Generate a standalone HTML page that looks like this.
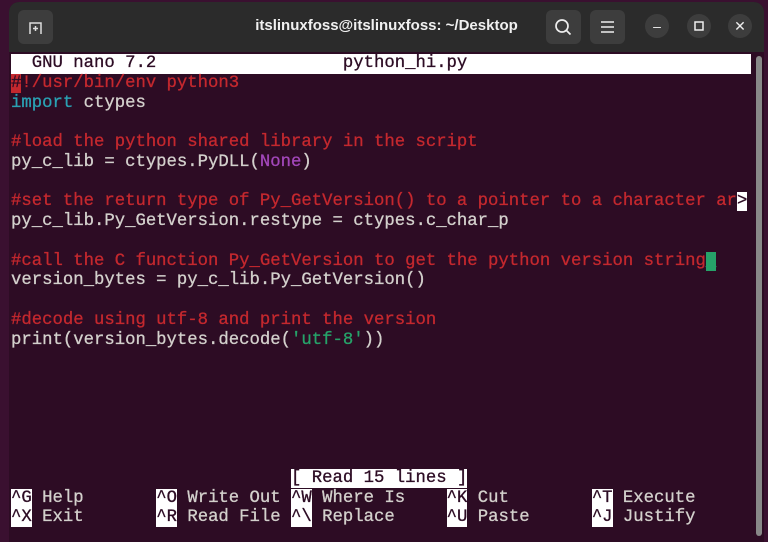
<!DOCTYPE html>
<html><head><style>
body{margin:0;width:768px;height:531px;background:#3a1030;overflow:hidden;font-family:"Liberation Sans",sans-serif}
.win{position:absolute;left:9px;top:2px;width:755px;height:540px;background:#2d0c24;border-radius:10px 10px 0 0;overflow:hidden}
.hdr{position:absolute;left:0;top:0;right:0;height:50px;background:#2b2b2b}
.btn{position:absolute;background:#3d3d3d;border-radius:6px}
.cir{position:absolute;width:24px;height:24px;border-radius:50%;background:#3d3d3d;top:12px;color:#eee;text-align:center;line-height:24px;font-size:14px}
.title{position:absolute;left:0;right:0;top:15px;text-align:center;color:#f0f0f0;font-weight:bold;font-size:15px}
pre{position:absolute;margin:0;left:2px;top:52px;font-family:"Liberation Mono",monospace;font-size:17.3px;line-height:19.75px;color:#d3d0cc;-webkit-text-stroke:0.3px currentColor}
.c{color:#c4282e}.k{color:#2aa1b3}.n{color:#a347ba}.s{color:#26a269}
.inv{background:#fff;color:#2d0c24}
.bar{display:inline-block;width:740px;background:#fff;color:#2d0c24}
.cur{background:#26a269;color:#26a269}
.sb{position:absolute;left:747px;top:54px;width:6px;height:480px;background:#888;border-radius:3px}
</style></head><body>
<div class="win">
<div class="hdr">
<div class="btn" style="left:9px;top:8px;width:35px;height:34px"><svg width="35" height="34"><path d="M12 24V13h11v11M15 18.5h5M17.5 16v5" stroke="#ddd" stroke-width="1.5" fill="none"/></svg></div>
<div class="title">itslinuxfoss@itslinuxfoss: ~/Desktop</div>
<div class="btn" style="left:537px;top:8px;width:35px;height:34px"><svg width="35" height="34"><circle cx="16" cy="16" r="6" stroke="#eee" stroke-width="1.7" fill="none"/><path d="M20.5 20.5l4 4" stroke="#eee" stroke-width="1.7"/></svg></div>
<div class="btn" style="left:581px;top:8px;width:35px;height:34px"><svg width="35" height="34"><path d="M11 12h13M11 17h13M11 22h13" stroke="#eee" stroke-width="1.5"/></svg></div>
<div class="cir" style="left:636px">–</div>
<div class="cir" style="left:678px"><svg width="24" height="24"><rect x="8" y="8" width="8" height="8" stroke="#eee" stroke-width="1.5" fill="none"/></svg></div>
<div class="cir" style="left:719px">✕</div>
</div>
<div class="sb"></div>
<pre><span class="bar">  GNU nano 7.2                  python_hi.py</span>
<span class="c"><span class="inv" style="background:#c4282e;color:#2d0c24">#</span>!/usr/bin/env python3</span>
<span class="k">import</span> ctypes

<span class="c">#load the python shared library in the script</span>
py_c_lib = ctypes.PyDLL(<span class="n">None</span>)

<span class="c">#set the return type of Py_GetVersion() to a pointer to a character ar</span><span class="inv">&gt;</span>
py_c_lib.Py_GetVersion.restype = ctypes.c_char_p

<span class="c">#call the C function Py_GetVersion to get the python version string</span><span class="cur">_</span>
version_bytes = py_c_lib.Py_GetVersion()

<span class="c">#decode using utf-8 and print the version</span>
print(version_bytes.decode(<span class="s">'utf-8'</span>))






                           <span class="inv">[ Read 15 lines ]</span>
<span class="inv">^G</span> Help       <span class="inv">^O</span> Write Out <span class="inv">^W</span> Where Is    <span class="inv">^K</span> Cut        <span class="inv">^T</span> Execute
<span class="inv">^X</span> Exit       <span class="inv">^R</span> Read File <span class="inv">^\</span> Replace     <span class="inv">^U</span> Paste      <span class="inv">^J</span> Justify</pre>
</div>
</body></html>
